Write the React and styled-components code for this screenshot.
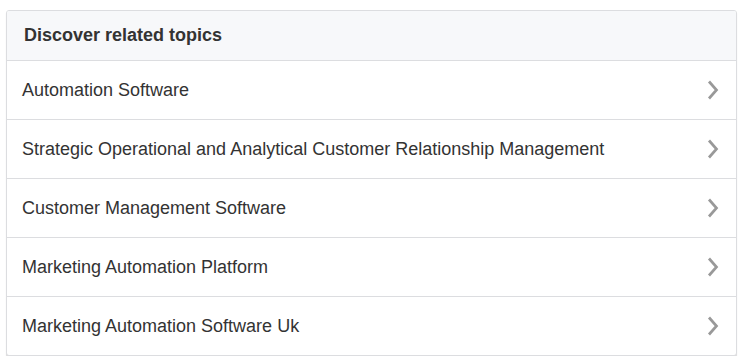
import React from "react";
import styled, { createGlobalStyle } from "styled-components";

const Global = createGlobalStyle`
  body {
    margin: 0;
    background: #fff;
    font-family: "Liberation Sans", Arial, sans-serif;
  }
`;

const Card = styled.div`
  margin: 10px 8px 0 6px;
  border: 1px solid #dcdde0;
  border-radius: 3px;
  background: #fff;
  box-shadow: 0 2px 1px rgba(0, 0, 0, 0.15);
  overflow: hidden;
`;

const Header = styled.div`
  height: 49px;
  display: flex;
  align-items: center;
  padding: 0 17px;
  background: #f7f8fa;
  border-bottom: 1px solid #dcdde0;
  font-size: 18px;
  font-weight: bold;
  color: #333;
`;

const Row = styled.a`
  height: 58px;
  display: flex;
  align-items: center;
  justify-content: space-between;
  padding: 0 16px 0 15px;
  border-bottom: ${(p) => (p.last ? "none" : "1px solid #dcdde0")};
  font-size: 18px;
  color: #333;
  text-decoration: none;
  cursor: pointer;
`;

const Chevron = () => (
  <svg width="14" height="20" viewBox="0 0 14 20">
    <path
      d="M3 1.5 L10.5 10 L3 18.5"
      fill="none"
      stroke="#999"
      strokeWidth="2.7"
    />
  </svg>
);

const topics = [
  "Automation Software",
  "Strategic Operational and Analytical Customer Relationship Management",
  "Customer Management Software",
  "Marketing Automation Platform",
  "Marketing Automation Software Uk",
];

export default function App() {
  return (
    <>
      <Global />
      <Card>
        <Header>Discover related topics</Header>
        {topics.map((t, i) => (
          <Row key={t} last={i === topics.length - 1}>
            <span>{t}</span>
            <Chevron />
          </Row>
        ))}
      </Card>
    </>
  );
}
